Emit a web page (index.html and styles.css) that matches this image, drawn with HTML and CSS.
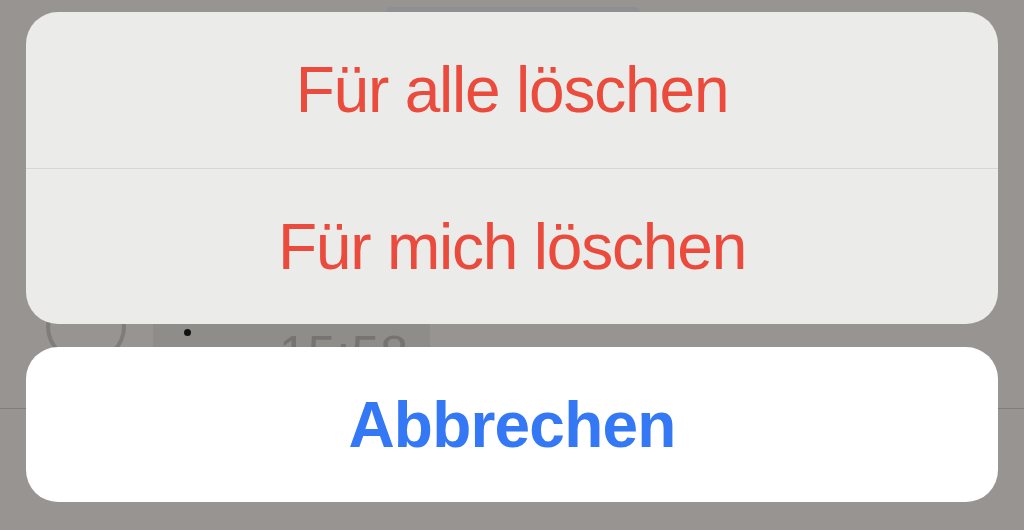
FILE: index.html
```html
<!DOCTYPE html>
<html lang="de">

<head>
    <meta charset="utf-8" />
    <meta name="viewport" content="width=device-width, initial-scale=1.0" />
    <title>Nachricht löschen</title>
    <link rel="stylesheet" href="styles.css">
</head>

<body>
    <!-- chat content dimmed behind the sheet -->
    <div class="backdrop">
        <div class="backdrop-tab"></div>
        <div class="backdrop-ring"></div>
        <div class="backdrop-bubble">
            <span class="backdrop-dot"></span>
            <span class="backdrop-time">15:58</span>
        </div>
        <div class="backdrop-line"></div>
    </div>

    <div class="action-sheet">
        <div class="action-group">
            <button class="action destructive">Für alle löschen</button>
            <button class="action destructive">Für mich löschen</button>
        </div>
        <button class="action cancel">Abbrechen</button>
    </div>
</body>

</html>
```

FILE: styles.css
```css
html {
    font-family: "Liberation Sans", Arial, sans-serif;
}

body {
    margin: 0;
    width: 1024px;
    height: 530px;
    background: #979491;
    overflow: hidden;
    position: relative;
}

.backdrop {
    position: absolute;
    inset: 0;
}

.backdrop-tab {
    position: absolute;
    left: 386px;
    top: 7px;
    width: 254px;
    height: 12px;
    border-radius: 6px;
    background: #8e8f92;
}

.backdrop-ring {
    position: absolute;
    left: 46px;
    top: 290px;
    width: 72px;
    height: 66px;
    border: 4px solid #7f7d7b;
    border-radius: 50%;
}

.backdrop-bubble {
    position: absolute;
    left: 153px;
    top: 318px;
    width: 277px;
    height: 40px;
    background: #8f8d8a;
}

.backdrop-dot {
    position: absolute;
    left: 31px;
    top: 11px;
    width: 7px;
    height: 7px;
    border-radius: 50%;
    background: #111;
}

.backdrop-time {
    position: absolute;
    left: 126px;
    top: 11px;
    font-size: 50px;
    line-height: 1;
    letter-spacing: 1px;
    color: #767472;
}

.backdrop-line {
    position: absolute;
    left: 0;
    right: 0;
    top: 408px;
    height: 1px;
    background: #7f7d7b;
}

.action-sheet {
    position: relative;
    display: flex;
    flex-direction: column;
    gap: 23px;
    padding: 12px 26px 0;
}

.action-group {
    display: flex;
    flex-direction: column;
    background: #ebebe9;
    border-radius: 32px;
    overflow: hidden;
}

.action {
    display: block;
    box-sizing: border-box;
    width: 100%;
    height: 156px;
    border: 0;
    margin: 0;
    padding: 0;
    background: none;
    font-family: inherit;
    font-size: 64px;
    text-align: center;
}

.action-group .action + .action {
    border-top: 1px solid #d6d6d3;
}

.destructive {
    color: #eb4b3c;
    letter-spacing: -1.2px;
}

.cancel {
    height: 155px;
    background: #fff;
    border-radius: 32px;
    color: #3478f6;
    font-weight: bold;
    letter-spacing: -0.8px;
}
```
